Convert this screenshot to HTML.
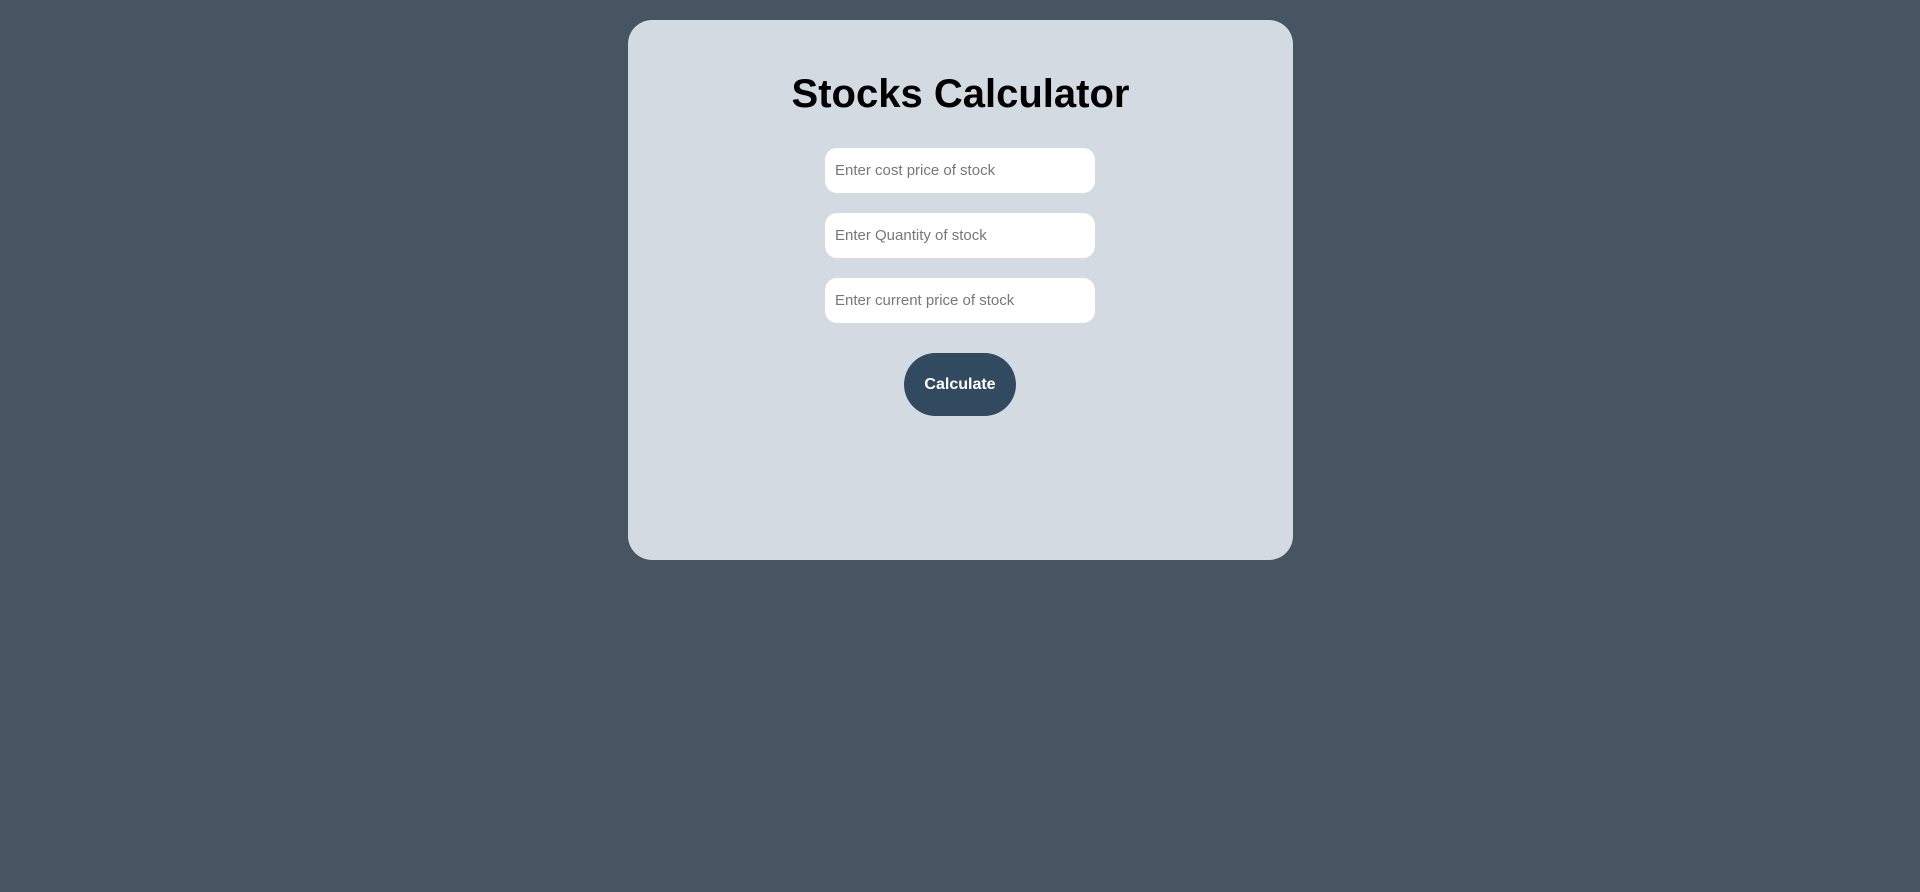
<!DOCTYPE html>
<html><head><style>
html,body{margin:0;height:892px;background:#475562;font-family:"Liberation Sans",sans-serif;}
.card{position:absolute;left:628px;top:20px;width:665px;height:540px;background:#d3dae2;border-radius:24px;}
h1{position:absolute;left:0;right:0;top:50px;margin:0;text-align:center;font-size:40px;font-weight:bold;color:#000;line-height:48px;}
.in{position:absolute;left:197px;width:270px;height:45px;background:#fff;border-radius:12px;box-sizing:border-box;padding-left:10px;font-size:15px;line-height:46px;color:#777;}
.btn{position:absolute;left:276px;top:333px;width:112px;height:63px;border-radius:32px;background:#324a60;color:#fff;font-weight:bold;font-size:16px;text-align:center;line-height:64px;}
</style></head><body>
<div class="card">
<h1>Stocks Calculator</h1>
<div class="in" style="top:128px">Enter cost price of stock</div>
<div class="in" style="top:193px">Enter Quantity of stock</div>
<div class="in" style="top:258px">Enter current price of stock</div>
<div class="btn">Calculate</div>
</div>
</body></html>
